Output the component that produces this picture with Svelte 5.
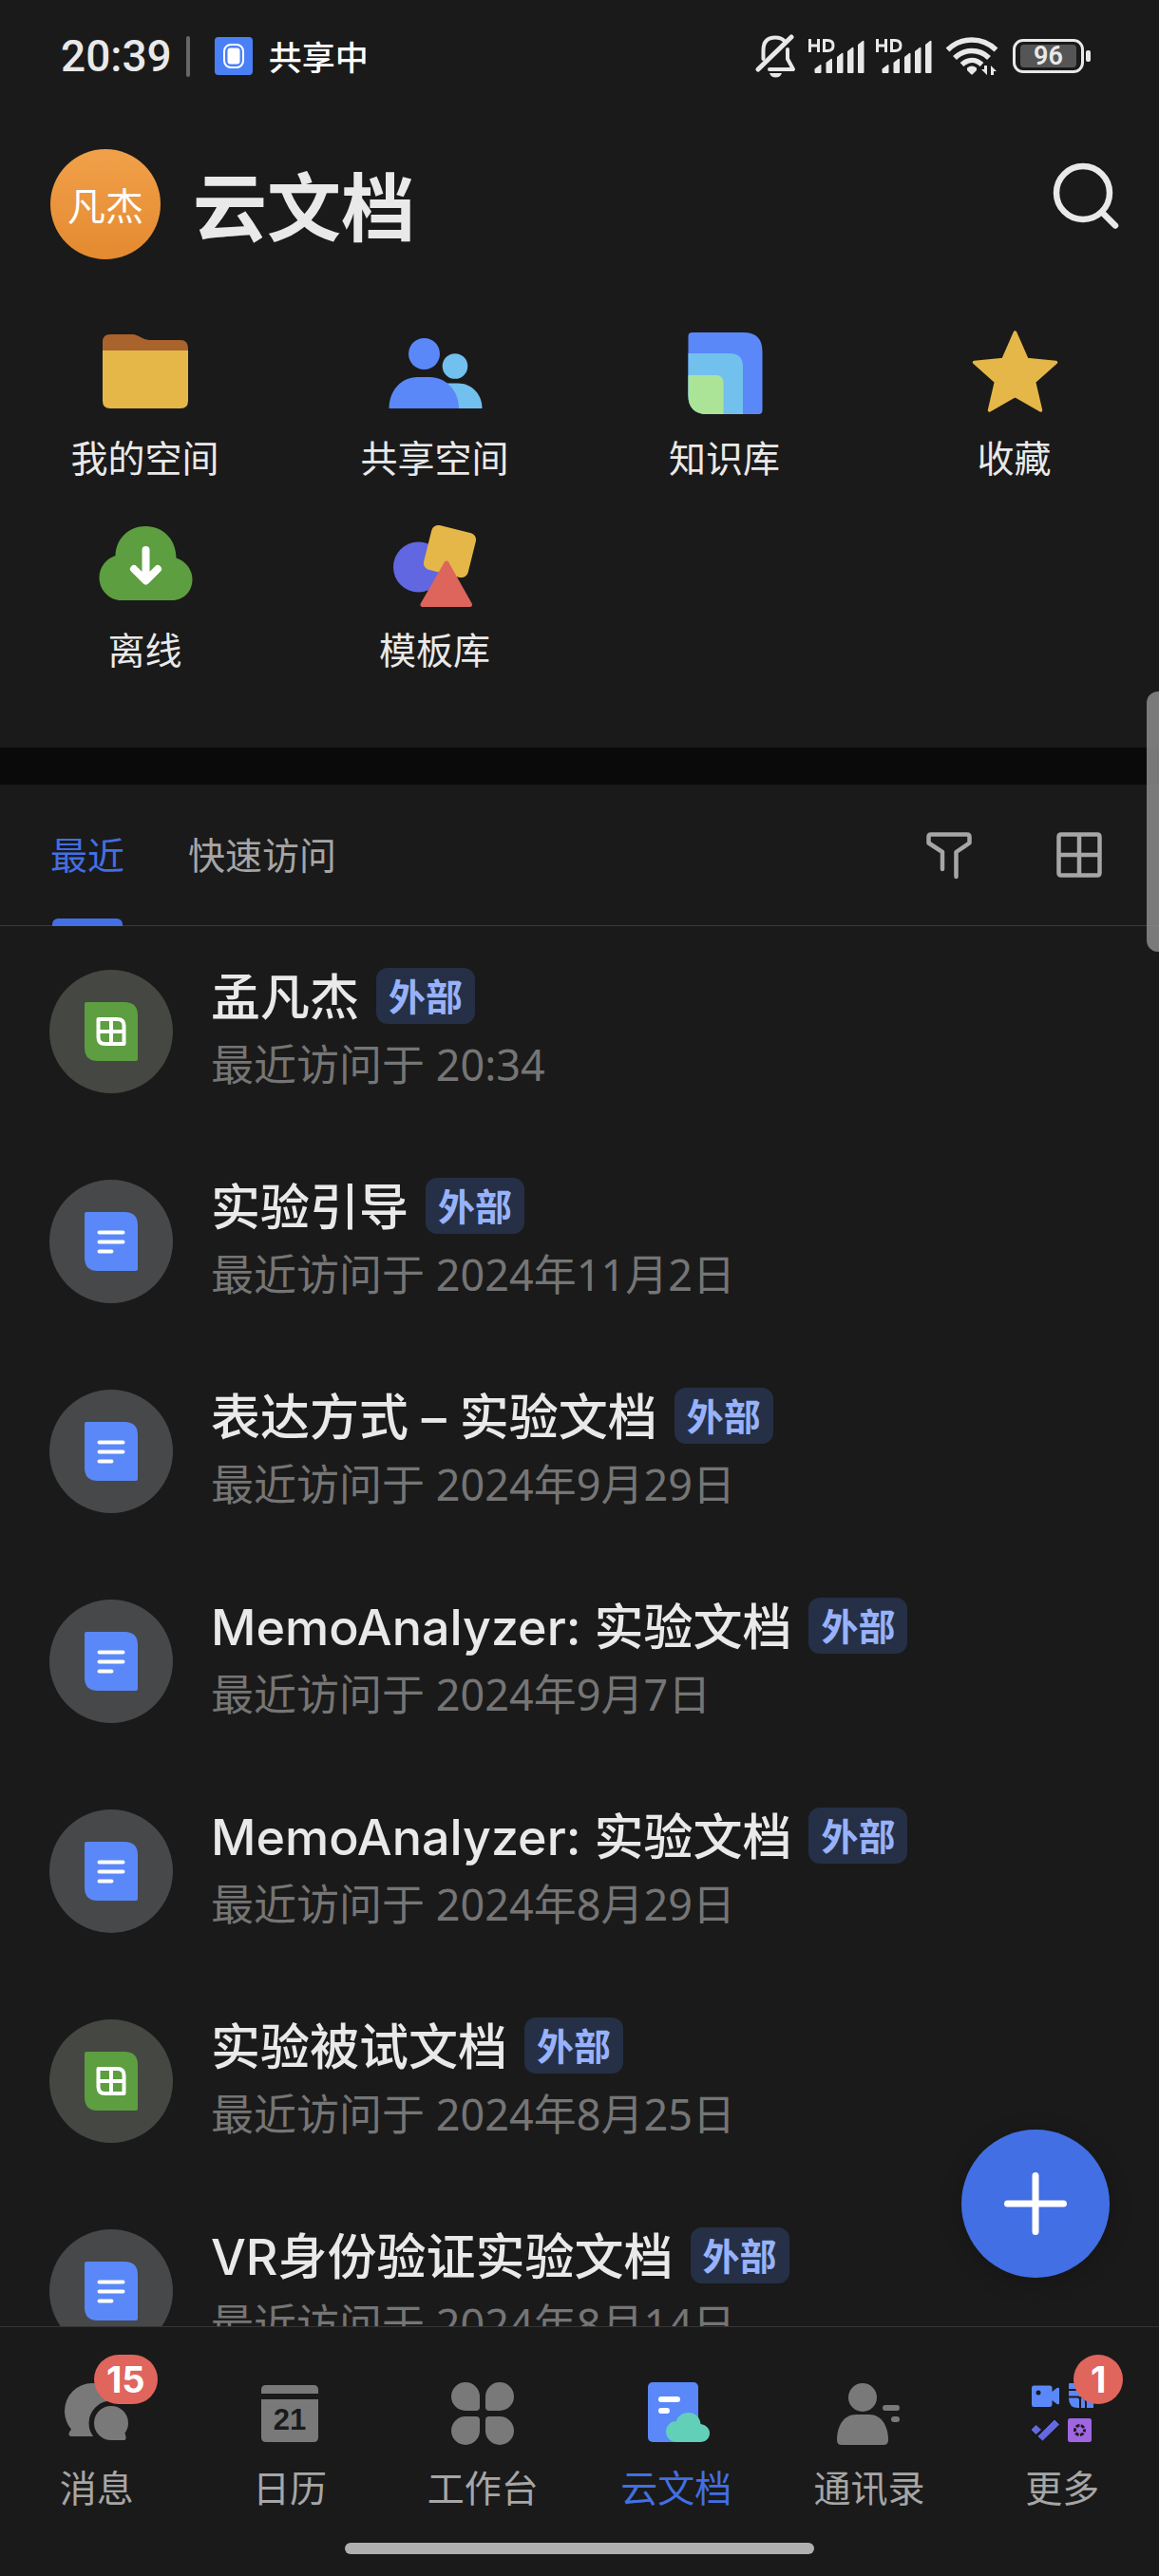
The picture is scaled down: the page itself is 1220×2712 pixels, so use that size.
<script>
  const shortcuts = [
    { icon: 'folder', label: '我的空间' },
    { icon: 'people', label: '共享空间' },
    { icon: 'wiki', label: '知识库' },
    { icon: 'star', label: '收藏' },
    { icon: 'offline', label: '离线' },
    { icon: 'template', label: '模板库' }
  ];

  const documents = [
    { kind: 'sheet', title: '孟凡杰', time: '20:34' },
    { kind: 'doc', title: '实验引导', time: '2024年11月2日' },
    { kind: 'doc', title: '表达方式 – 实验文档', time: '2024年9月29日' },
    { kind: 'doc', title: 'MemoAnalyzer: 实验文档', time: '2024年9月7日' },
    { kind: 'doc', title: 'MemoAnalyzer: 实验文档', time: '2024年8月29日' },
    { kind: 'sheet', title: '实验被试文档', time: '2024年8月25日' },
    { kind: 'doc', title: 'VR身份验证实验文档', time: '2024年8月14日' }
  ];

  const navItems = [
    { icon: 'chat', label: '消息', badge: '15' },
    { icon: 'calendar', label: '日历' },
    { icon: 'workbench', label: '工作台' },
    { icon: 'docs', label: '云文档' },
    { icon: 'contacts', label: '通讯录' },
    { icon: 'more', label: '更多', badge: '1' }
  ];

  let activeTab = $state('最近');
  let activeNav = $state('docs');
</script>

{#snippet signal()}
  <svg class="signal" viewBox="0 0 60 44" aria-hidden="true">
    <g fill="none" stroke="#e8e8e8" stroke-width="3">
      <path d="M2.500 4v14M11.500 4v14M2.500 11h9" />
      <path d="M17.500 5.500v11h3.500c4 0 6-2 6-5.500s-2-5.500-6-5.500z" />
    </g>
    <g fill="#e8e8e8">
      <path d="M7.500 39v-3.500l6-4.500q1-.5 1 1v7q0 1-1 1h-5q-1 0-1-1z" />
      <path d="M19.500 39v-10l5-4q1.500-.8 1.500 1v13q0 1-1 1h-4.500q-1 0-1-1z" />
      <path d="M31 39v-16l5-4q1.500-.8 1.500 1v19q0 1-1 1h-4.500q-1 0-1-1z" />
      <path d="M42 39v-22l5-4q1.500-.8 1.500 1v25q0 1-1 1h-4.500q-1 0-1-1z" />
      <path d="M53 39v-29l5-4q1.500-.8 1.500 1v32q0 1-1 1h-4.500q-1 0-1-1z" />
    </g>
  </svg>
{/snippet}

<div class="app">
  <header>
    <div class="status">
      <span class="clock">20:39</span>
      <span class="divider"></span>
      <svg class="share-icon" viewBox="0 0 40 40" aria-hidden="true">
        <rect width="40" height="40" rx="4" fill="#4a80f6" />
        <rect x="10" y="8" width="20" height="24" rx="7" fill="none" stroke="#fff" stroke-width="2" />
        <rect x="13.500" y="11.500" width="13" height="17" rx="3" fill="#fff" />
      </svg>
      <span class="sharing">共享中</span>
      <div class="status-icons">
        <svg class="bell" viewBox="0 0 44 48" aria-hidden="true">
          <g fill="none" stroke="#e8e8e8" stroke-width="4" stroke-linecap="round" stroke-linejoin="round">
            <path d="M8.500 27V18C8.500 8 14 4.500 21 4.500c4.500 0 8 1.500 10 4" />
            <path d="M34 17v10l6 11H15" />
            <path d="M3 38L38 4" stroke-width="5" />
          </g>
          <path d="M15 42h13c-1 3-3.500 4.500-6.500 4.500S16 45 15 42z" fill="#e8e8e8" />
        </svg>
        {@render signal()}
        {@render signal()}
        <svg class="wifi" viewBox="0 0 56 44" aria-hidden="true">
          <g fill="none" stroke="#e8e8e8" stroke-width="5.500">
            <path d="M2.500 15.500C17 1.500 39 1.500 53.500 15.500" />
            <path d="M10 24C20 14 36 14 46 24" />
            <path d="M17.500 31C24 25 32 25 38.500 31" />
          </g>
          <path d="M23 34.500q5-4 10 0v2.500l-4 4q-1 1-2 0l-4-4z" fill="#e8e8e8" />
          <path d="M44 32v10l-6-6h3v-4zM48 42V32l6 6h-3v4z" fill="#e8e8e8" />
        </svg>
        <div class="battery"><span>96</span></div>
      </div>
    </div>

    <div class="titlebar">
      <button class="avatar" type="button">凡杰</button>
      <h1>云文档</h1>
      <button class="search" type="button" aria-label="搜索">
        <svg viewBox="0 0 72 72" aria-hidden="true">
          <g fill="none" stroke="#e9e9e9" stroke-width="6.500" stroke-linecap="round">
            <circle cx="33" cy="33" r="28" />
            <path d="M54 54.500L67 67.500" />
          </g>
        </svg>
      </button>
    </div>
  </header>

  <nav class="shortcuts" aria-label="快捷入口">
    {#each shortcuts as item}
      <a href="#{item.icon}">
        <svg viewBox="0 0 104 104" aria-hidden="true">
          {#if item.icon === 'folder'}
            <path d="M7 40V20q0-8 8-8h23c4 0 7 2 10 3.500s5 2.500 10 2.500h31q8 0 8 9v13z" fill="#a9632c" />
            <path d="M7 29h90v53q0 8-8 8H15q-8 0-8-8z" fill="#e5b748" />
          {:else if item.icon === 'people'}
            <circle cx="73" cy="45.500" r="13.300" fill="#72c0ee" />
            <path d="M60 63.500h16c14 0 25.500 11 25.500 26.500H60z" fill="#72c0ee" />
            <circle cx="40.500" cy="32.500" r="16.500" fill="#5a88f9" />
            <path d="M3.500 90c0-19 13-33 30-33h13C63 57 77 71 77 90z" fill="#5a88f9" />
          {:else if item.icon === 'wiki'}
            <path d="M17.500 10h54q20 0 20 20v62q0 4-4 4h-54q-20 0-20-20V14q0-4 4-4z" fill="#5a88f9" />
            <path d="M13.500 32H57q14 0 14 14v50H33.500q-20 0-20-20z" fill="#72c0ee" />
            <path d="M13.500 55h29q8 0 8 8v33h-17q-20 0-20-20z" fill="#abe397" />
          {:else if item.icon === 'star'}
            <path d="M52.500 10L65 38.500 95.500 41.500 72.500 62 79.500 92 52.500 76.500 25.500 92 32.500 62 9.500 41.500 40 38.500z" fill="#e5b748" stroke="#e5b748" stroke-width="3.500" stroke-linejoin="round" />
          {:else if item.icon === 'offline'}
            <path d="M27 90C14 90 3.500 79.500 3.500 66c0-11 7.500-20 17-23 .5-18 14-31 32-31s32 14 32 33.500c10.500 3.500 17 12.500 17 22.500 0 12-8.500 22-21.500 22z" fill="#5c9e40" />
            <path d="M52.500 37v30M40 57l12.500 12.500L65 57" fill="none" stroke="#fff" stroke-width="8" stroke-linecap="round" stroke-linejoin="round" />
          {:else}
            <circle cx="34.500" cy="55" r="26.500" fill="#6167e0" />
            <rect x="43.500" y="14.500" width="48" height="48" rx="7" transform="rotate(14 67.500 38.500)" fill="#e5b748" />
            <path d="M64 51L39 94.500h49.500z" fill="#dd655c" stroke="#dd655c" stroke-width="5" stroke-linejoin="round" />
          {/if}
        </svg>
        <span>{item.label}</span>
      </a>
    {/each}
  </nav>

  <main>
    <div class="toolbar">
      <div class="tabs" role="tablist">
        {#each ['最近', '快速访问'] as tab}
          <button
            type="button"
            role="tab"
            aria-selected={activeTab === tab}
            class:active={activeTab === tab}
            onclick={() => (activeTab = tab)}>{tab}</button>
        {/each}
      </div>
      <div class="tools">
        <button type="button" aria-label="筛选">
          <svg viewBox="0 0 56 56" aria-hidden="true">
            <path d="M21 43V25L6.500 15.500V9q0-2.500 2.500-2.500h38q2.500 0 2.500 2.500v6.500L35.500 25v26" fill="none" stroke="#a6a6a6" stroke-width="4.500" stroke-linecap="round" stroke-linejoin="round" />
          </svg>
        </button>
        <button type="button" aria-label="网格视图">
          <svg viewBox="0 0 56 56" aria-hidden="true">
            <path d="M9 6.500h38q2.500 0 2.500 2.500v38q0 2.500-2.500 2.500H9q-2.500 0-2.500-2.500V9q0-2.500 2.500-2.500zM28 6.500v43M6.500 28h43" fill="none" stroke="#a6a6a6" stroke-width="4.500" />
          </svg>
        </button>
      </div>
    </div>

    <ul class="documents">
      {#each documents as doc}
        <li>
          <a href="#document">
            <span class="disc {doc.kind}">
              <svg viewBox="0 0 56 62" aria-hidden="true">
                {#if doc.kind === 'sheet'}
                  <path d="M2 0h40q14 0 14 14v46q0 2-2 2H14Q0 62 0 48V2q0-2 2-2z" fill="#5c9e40" />
                  <path d="M14.500 18h20q7 0 7 7v19h-20q-7 0-7-7zM28 18v26M14.500 31h27" fill="none" stroke="#fff" stroke-width="4" stroke-linejoin="round" />
                {:else}
                  <path d="M2 0h40q14 0 14 14v46q0 2-2 2H14Q0 62 0 48V2q0-2 2-2z" fill="#5a88f9" />
                  <path d="M15.500 21.500h25M15.500 31.500h25M15.500 41.500h13" fill="none" stroke="#fff" stroke-width="4" stroke-linecap="round" />
                {/if}
              </svg>
            </span>
            <span class="info">
              <span class="name">
                <span class="title">{doc.title}</span>
                <span class="tag">外部</span>
              </span>
              <span class="visited">最近访问于 {doc.time}</span>
            </span>
          </a>
        </li>
      {/each}
    </ul>

    <button class="create" type="button" aria-label="新建">
      <svg viewBox="0 0 156 156" aria-hidden="true">
        <path d="M78 48.500v59M48.500 78h59" stroke="#fff" stroke-width="7" stroke-linecap="round" />
      </svg>
    </button>
  </main>

  <footer>
    <nav class="bottom" aria-label="主导航">
      {#each navItems as item}
        <a href="#{item.icon}" class:active={activeNav === item.icon} onclick={() => (activeNav = item.icon)}>
          <span class="nav-icon">
            <svg viewBox="0 0 80 80" aria-hidden="true">
              {#if item.icon === 'chat'}
                <path d="M35 8a29 29 0 0 1 29 29c0 16-12 27-29 27H13q-3 0-2.500-3 .5-2 2.500-4.500C8.500 51 6 45 6 37A29 29 0 0 1 35 8z" fill="#797979" />
                <path d="M55 32a18 18 0 0 1 18 18c0 4-1.500 7.500-3.500 10.500l1 4q.5 3.500-2.500 3.500H55a18 18 0 0 1 0-36z" fill="#797979" stroke="#1a1a1a" stroke-width="11" paint-order="stroke" />
              {:else if item.icon === 'calendar'}
                <path d="M10 20.500V15q0-5 5-5h50q5 0 5 5v4H10zM10 25h60v40q0 5-5 5H15q-5 0-5-5z" fill="#797979" />
                <text x="40" y="56.500" text-anchor="middle" class="day">21</text>
              {:else if item.icon === 'workbench'}
                <g fill="#797979">
                  <path d="M22 7a15 15 0 0 1 15 15v11q0 4-4 4H22a15 15 0 0 1 0-30z" />
                  <path d="M58 7a15 15 0 0 1 0 30H47q-4 0-4-4V22A15 15 0 0 1 58 7z" />
                  <path d="M22 43h11q4 0 4 4v11a15 15 0 1 1-15-15z" />
                  <path d="M47 43h11a15 15 0 1 1-15 15V47q0-4 4-4z" />
                </g>
              {:else if item.icon === 'docs'}
                <rect x="10" y="7" width="53" height="63" rx="5" fill="#5a88f9" />
                <path d="M24 25h17M24 37h6" stroke="#fff" stroke-width="6" stroke-linecap="round" />
                <path d="M40 70a10.500 10.500 0 0 1 0-22c1-5 6-9 13-9s12 5 12.500 12c6 1 9.500 5 9.500 9.500 0 5.500-4 9.500-10 9.500z" fill="#62d0b8" />
              {:else if item.icon === 'contacts'}
                <g fill="#797979">
                  <circle cx="33" cy="23" r="15" />
                  <path d="M6 68c0-16 8-27 20-27h14c12 0 20 11 20 27q0 5-5 5H11q-5 0-5-5z" />
                  <rect x="54" y="31" width="18" height="6" rx="3" />
                  <rect x="63" y="43" width="9" height="6" rx="3" />
                </g>
              {:else}
                <path d="M10 10.500h17q2.500 0 2.500 2.500v4l5-4q2.500-1 2.500 1v15q0 2-2.500 1l-5-4v4q0 3-2.500 3H10q-2 0-2-2.500V13q0-2.500 2-2.500z" fill="#5a88f9" />
                <circle cx="15" cy="18" r="2.500" fill="#1a1a1a" />
                <path d="M48 8h25v26H57q-10 0-10-10V9q0-1 1-1z" fill="#5a88f9" />
                <path d="M47 15h26M47 22.500h9q3 0 3 3V34M59 22.500q6 0 6 6V34" fill="none" stroke="#1a1a1a" stroke-width="2" />
                <path d="M12.500 52.500l5 4.500-5 4.500L8 57zM32 47l4.500 4.500L19.500 68 15 64z" fill="#6569e0" stroke="#6569e0" stroke-linejoin="round" />
                <rect x="46" y="45" width="25" height="25" rx="2.500" fill="#a066e2" />
                <circle cx="58.500" cy="57.500" r="5" fill="none" stroke="#1a1a1a" stroke-width="3" stroke-dasharray="3.740 1.500" stroke-dashoffset="1.870" />
              {/if}
            </svg>
            {#if item.badge}<span class="badge">{item.badge}</span>{/if}
          </span>
          <span>{item.label}</span>
        </a>
      {/each}
    </nav>
    <div class="home-bar"></div>
  </footer>
  <div class="edge-handle"></div>
</div>

<style>
  :global(body) {
    margin: 0;
    background: #1a1a1a;
  }

  .app {
    position: relative;
    display: flex;
    flex-direction: column;
    height: 100vh;
    overflow: hidden;
    background: #1a1a1a;
    color: #e9e9e9;
    font-family: 'Noto Sans', 'Noto Sans CJK SC', sans-serif;
  }

  button {
    display: flex;
    align-items: center;
    justify-content: center;
    padding: 0;
    border: 0;
    background: none;
    color: inherit;
    font: inherit;
  }

  a {
    color: inherit;
    text-decoration: none;
  }

  svg {
    display: block;
    flex: none;
  }

  .status {
    display: flex;
    align-items: center;
    height: 118px;
    padding: 0 79px 0 64px;
  }

  .clock {
    font-family: Roboto, sans-serif;
    font-size: 46px;
    font-weight: 500;
    line-height: 52px;
  }

  .divider {
    width: 4px;
    height: 43px;
    margin: 0 26px 0 15px;
    border-radius: 2px;
    background: #666;
  }

  .share-icon {
    width: 40px;
    height: 40px;
    margin-right: 17px;
  }

  .sharing {
    color: #fff;
    font-family: 'Noto Sans CJK SC', sans-serif;
    font-size: 35px;
    font-weight: 500;
    line-height: 52px;
  }

  .status-icons {
    display: flex;
    align-items: center;
    gap: 11px;
    margin-left: auto;
  }

  .bell {
    width: 44px;
    height: 48px;
  }

  .signal {
    width: 60px;
    height: 44px;
  }

  .wifi {
    width: 56px;
    height: 44px;
    margin-left: 3px;
  }

  .battery {
    position: relative;
    box-sizing: border-box;
    width: 75px;
    height: 36px;
    margin-left: 4px;
    padding: 3px 5px;
    border: 3px solid #e8e8e8;
    border-radius: 11px;
  }

  .battery span {
    display: block;
    border-radius: 4px;
    background: #555;
    font-family: Roboto, sans-serif;
    font-size: 27px;
    font-weight: 600;
    line-height: 24px;
    text-align: center;
  }

  .battery::after {
    content: '';
    position: absolute;
    top: 9px;
    right: -10px;
    width: 5px;
    height: 12px;
    border-radius: 2px;
    background: #e8e8e8;
  }

  .titlebar {
    display: flex;
    align-items: flex-start;
    padding: 39px 41px 0 53px;
  }

  .avatar {
    width: 116px;
    height: 116px;
    border-radius: 50%;
    background: linear-gradient(#f1a04a, #e48a30);
    color: #fff;
    font-size: 40px;
  }

  h1 {
    flex: 1;
    margin: 0 0 0 34px;
    font-size: 78px;
    font-weight: 700;
    line-height: 122px;
  }

  .search {
    height: 98px;
  }

  .search svg {
    width: 72px;
    height: 72px;
  }

  .shortcuts {
    display: grid;
    grid-template-columns: repeat(4, 1fr);
    row-gap: 34px;
    padding: 61px 0 77px;
    border-bottom: 39px solid #0a0a0a;
    font-size: 39px;
    line-height: 52px;
  }

  .shortcuts a {
    display: flex;
    flex-direction: column;
    align-items: center;
    gap: 12px;
  }

  .shortcuts svg {
    width: 104px;
    height: 104px;
  }

  main {
    position: relative;
    display: flex;
    flex: 1;
    flex-direction: column;
    min-height: 0;
  }

  .toolbar {
    display: flex;
    flex: none;
    align-items: stretch;
    justify-content: space-between;
    height: 148px;
    padding: 0 56px 0 53px;
    border-bottom: 1px solid #3a3a3a;
  }

  .tabs {
    display: flex;
    gap: 67px;
    color: #a6a6a6;
    font-size: 39px;
    line-height: 52px;
  }

  .tabs button {
    position: relative;
  }

  .tabs .active {
    color: #426fe3;
  }

  .tabs .active::after {
    content: '';
    position: absolute;
    right: 2px;
    bottom: -1px;
    left: 2px;
    height: 8px;
    border-radius: 6px 6px 0 0;
    background: #426fe3;
  }

  .tools {
    display: flex;
    gap: 81px;
  }

  .tools svg {
    width: 56px;
    height: 56px;
  }

  .documents {
    flex: 1;
    min-height: 0;
    margin: 0;
    padding: 0;
    overflow: hidden;
    list-style: none;
  }

  .documents a {
    display: flex;
    align-items: center;
    gap: 40px;
    height: 130px;
    padding: 46px 52px 45px;
  }

  .disc {
    display: flex;
    flex: none;
    align-items: center;
    justify-content: center;
    width: 130px;
    height: 130px;
    border-radius: 50%;
    background: #474849;
  }

  .disc.sheet {
    background: #454742;
  }

  .disc svg {
    width: 56px;
    height: 62px;
  }

  .info {
    display: flex;
    flex-direction: column;
    gap: 12px;
    padding-bottom: 2px;
    white-space: nowrap;
  }

  .name {
    display: flex;
    align-items: flex-start;
    gap: 18px;
    height: 60px;
  }

  .title {
    font-family: Inter, 'Noto Sans CJK SC', sans-serif;
    font-size: 52px;
    font-weight: 500;
    line-height: 64px;
  }

  .tag {
    padding: 0 13px;
    border-radius: 12px;
    background: #253046;
    color: #97b2fb;
    font-size: 39px;
    font-weight: 600;
    line-height: 59px;
  }

  .visited {
    color: #757575;
    font-size: 45px;
    line-height: 60px;
  }

  .create {
    position: absolute;
    right: 52px;
    bottom: 51px;
    width: 156px;
    height: 156px;
    border-radius: 50%;
    background: #426fe3;
    box-shadow: 0 4px 24px rgb(0 0 0 / 20%);
  }

  .create svg {
    width: 156px;
    height: 156px;
  }

  footer {
    flex: none;
    padding-bottom: 23px;
    border-top: 1px solid #353535;
  }

  .bottom {
    display: grid;
    grid-template-columns: repeat(6, 1fr);
    padding: 51px 0 32px;
    color: #a6a6a6;
    font-size: 39px;
    line-height: 52px;
  }

  .bottom a {
    display: flex;
    flex-direction: column;
    align-items: center;
    gap: 12px;
  }

  .bottom .active {
    color: #426fe3;
  }

  .nav-icon {
    position: relative;
  }

  .nav-icon svg {
    width: 80px;
    height: 80px;
  }

  .day {
    fill: #1a1a1a;
    font-family: 'Liberation Sans', sans-serif;
    font-size: 31px;
    font-weight: 700;
  }

  .badge {
    position: absolute;
    top: -22px;
    right: -24px;
    box-sizing: border-box;
    min-width: 52px;
    padding: 0 13px;
    border-radius: 26px;
    background: #e0655d;
    color: #fff;
    font-family: Inter, sans-serif;
    font-size: 38px;
    font-weight: 700;
    line-height: 52px;
    text-align: center;
  }

  .home-bar {
    width: 494px;
    height: 12px;
    margin: 0 auto;
    border-radius: 6px;
    background: #b0b0b0;
  }

  .edge-handle {
    position: absolute;
    top: 728px;
    right: 0;
    width: 13px;
    height: 274px;
    border-radius: 12px 0 0 12px;
    background: rgb(140 140 140 / 85%);
  }
</style>
